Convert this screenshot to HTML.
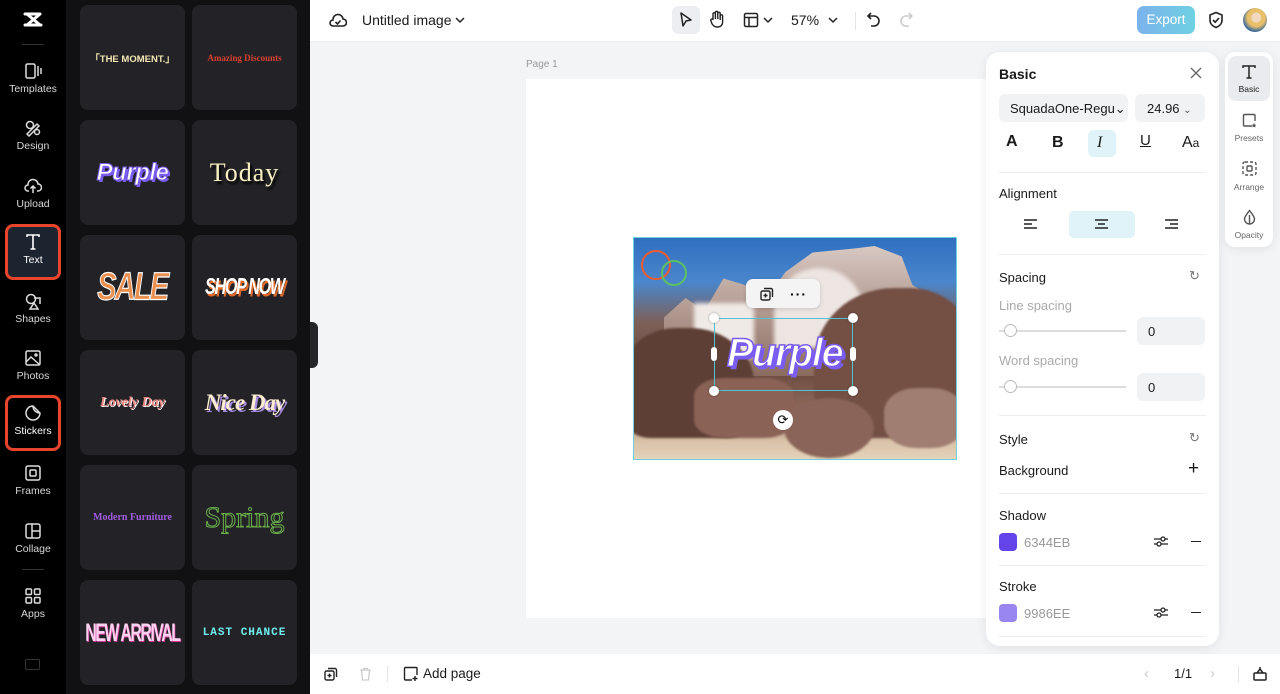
<!DOCTYPE html>
<html><head><meta charset="utf-8">
<style>
*{box-sizing:border-box;margin:0;padding:0}
body{width:1280px;height:694px;overflow:hidden;font-family:"Liberation Sans",sans-serif;background:#f3f4f6;position:relative}
.side{position:absolute;left:0;top:0;width:66px;height:694px;background:#000}
.nav{position:absolute;left:6px;width:54px;height:54px;text-align:center;color:#d8d8d8;font-size:10.5px}
.nav svg{display:block;margin:6px auto 3px}
.nav.sel{border:3px solid #e8452c;border-radius:8px;background:#1c2430;color:#fff}
.panel{position:absolute;left:66px;top:0;width:244px;height:694px;background:#111114}
.card{position:absolute;width:105px;height:105px;background:#232327;border-radius:8px;display:flex;align-items:center;justify-content:center;overflow:hidden}
.top{position:absolute;left:310px;top:0;width:970px;height:42px;background:#fff;border-bottom:1px solid #eceef0}
.bot{position:absolute;left:310px;top:654px;width:970px;height:40px;background:#fff}
.rp{position:absolute;left:986px;top:52px;width:233px;height:594px;background:#fff;border-radius:14px;box-shadow:0 2px 10px rgba(0,0,0,.08)}
.rt{position:absolute;left:1225px;top:52px;width:48px;height:195px;background:#fff;border-radius:10px;box-shadow:0 2px 10px rgba(0,0,0,.08)}
.t{position:absolute;font-size:13px;color:#1a1a1a}
.hr{position:absolute;left:13px;width:207px;height:1px;background:#eceef0}
.box{position:absolute;background:#f1f2f4;border-radius:6px}
.rk{position:absolute;filter:blur(1px)}
</style></head><body>
<div class="side">
 <svg style="position:absolute;left:22px;top:10px" width="22" height="20" viewBox="0 0 22 20"><path d="M3 4h15L5 15h14M3 15h1.5M18 4L5 4M5 4l13 11" stroke="#fff" stroke-width="3" fill="none" stroke-linecap="round" stroke-linejoin="round"/></svg>
 <div style="position:absolute;left:22px;top:44px;width:22px;height:1px;background:#333"></div>
 <div class="nav" style="top:56px"><svg width="18" height="18" viewBox="0 0 18 18" fill="none" stroke="#ddd" stroke-width="1.5"><rect x="2" y="2" width="9" height="14" rx="1.5"/><path d="M14 4v10M17 6v6"/></svg>Templates</div>
 <div class="nav" style="top:113px"><svg width="18" height="18" viewBox="0 0 18 18" fill="none" stroke="#ddd" stroke-width="1.5"><circle cx="6" cy="6" r="3.5"/><path d="M3 15l10-10 2 2-10 10z"/><circle cx="13" cy="13" r="2.5"/></svg>Design</div>
 <div class="nav" style="top:171px"><svg width="18" height="18" viewBox="0 0 18 18" fill="none" stroke="#ddd" stroke-width="1.5"><path d="M5 14H4a3 3 0 010-6 5 5 0 0110-1 3.5 3.5 0 010 7h-1M9 16V9M6.5 11.5L9 9l2.5 2.5"/></svg>Upload</div>
 <div class="nav sel" style="top:224px;left:5px;width:56px;height:56px"><svg width="18" height="18" viewBox="0 0 18 18" fill="none" stroke="#fff" stroke-width="1.6"><path d="M3 4V2h12v2M9 2v14M6.5 16h5"/></svg>Text</div>
 <div class="nav" style="top:286px"><svg width="18" height="18" viewBox="0 0 18 18" fill="none" stroke="#ddd" stroke-width="1.5"><circle cx="7" cy="7" r="4.5"/><path d="M10 6h6v6M10 11l-4 6h8z"/></svg>Shapes</div>
 <div class="nav" style="top:343px"><svg width="18" height="18" viewBox="0 0 18 18" fill="none" stroke="#ddd" stroke-width="1.5"><rect x="2" y="2" width="14" height="14" rx="1.5"/><path d="M2 13l5-5 9 8"/><circle cx="12" cy="6" r="1"/></svg>Photos</div>
 <div class="nav sel" style="top:395px;left:5px;width:56px;height:56px;background:#000"><svg width="18" height="18" viewBox="0 0 18 18" fill="none" stroke="#ddd" stroke-width="1.5"><path d="M16 9A7 7 0 119 2l7 7zM9 2a7 7 0 007 7"/></svg>Stickers</div>
 <div class="nav" style="top:458px"><svg width="18" height="18" viewBox="0 0 18 18" fill="none" stroke="#ddd" stroke-width="1.5"><rect x="2" y="2" width="14" height="14" rx="2"/><rect x="6" y="6" width="6" height="6" rx="1"/></svg>Frames</div>
 <div class="nav" style="top:516px"><svg width="18" height="18" viewBox="0 0 18 18" fill="none" stroke="#ddd" stroke-width="1.5"><rect x="2" y="2" width="14" height="14" rx="2"/><path d="M8 2v14M8 9h8"/></svg>Collage</div>
 <div style="position:absolute;left:22px;top:569px;width:22px;height:1px;background:#333"></div>
 <div class="nav" style="top:581px"><svg width="18" height="18" viewBox="0 0 18 18" fill="none" stroke="#ddd" stroke-width="1.5"><rect x="2" y="2" width="5.5" height="5.5" rx="1"/><rect x="10.5" y="2" width="5.5" height="5.5" rx="1"/><rect x="2" y="10.5" width="5.5" height="5.5" rx="1"/><rect x="10.5" y="10.5" width="5.5" height="5.5" rx="1"/></svg>Apps</div>
 <div style="position:absolute;left:25px;top:659px;width:15px;height:11px;border:1.5px solid #333;border-radius:2px"></div>
</div>
<div class="panel">
 <div class="card" style="left:14px;top:5px"><span style="color:#f4e7b5;font-weight:bold;font-size:9.5px">「THE MOMENT.」</span></div>
 <div class="card" style="left:126px;top:5px"><span style="color:#d9402f;font-family:'Liberation Serif',serif;font-weight:bold;font-size:9px">Amazing Discounts</span></div>
 <div class="card" style="left:14px;top:120px"><span style="color:#fff;font-weight:bold;font-style:italic;font-size:24px;letter-spacing:-.5px;-webkit-text-stroke:1px #7a5cf0;text-shadow:2px 2px 0 #7a5cf0">Purple</span></div>
 <div class="card" style="left:126px;top:120px"><span style="color:#f7efc2;font-family:'Liberation Serif',serif;font-size:26px;letter-spacing:1px;text-shadow:2px 3px 2px #000">Today</span></div>
 <div class="card" style="left:14px;top:235px"><span style="display:inline-block;color:#e98f4f;font-weight:bold;font-style:italic;font-size:34px;letter-spacing:-2px;-webkit-text-stroke:1px #fff;transform:scaleX(.85) scaleY(1.15)">SALE</span></div>
 <div class="card" style="left:126px;top:235px"><span style="display:inline-block;color:#fff;font-weight:bold;font-style:italic;font-size:19px;letter-spacing:-1.5px;text-shadow:2px 2px 0 #e06a2a;transform:scaleX(.85) scaleY(1.2)">SHOP NOW</span></div>
 <div class="card" style="left:14px;top:350px"><span style="color:#f38b85;font-family:'Liberation Serif',serif;font-weight:bold;font-style:italic;font-size:14px;text-shadow:1px 1px 0 #fff">Lovely Day</span></div>
 <div class="card" style="left:126px;top:350px"><span style="color:#fbeed0;font-family:'Liberation Serif',serif;font-weight:bold;font-style:italic;font-size:23px;letter-spacing:-1px;text-shadow:2px 2px 0 #a78ae0">Nice Day</span></div>
 <div class="card" style="left:14px;top:465px"><span style="color:#a15be0;font-family:'Liberation Serif',serif;font-weight:bold;font-size:10px">Modern Furniture</span></div>
 <div class="card" style="left:126px;top:465px"><span style="color:transparent;-webkit-text-stroke:1px #6ab04a;font-family:'Liberation Serif',serif;font-size:30px">Spring</span></div>
 <div class="card" style="left:14px;top:580px"><span style="display:inline-block;color:#fbd3f0;font-weight:bold;font-size:22px;letter-spacing:-2px;transform:scaleX(.72) scaleY(1.15);text-shadow:1px 1px 0 #d3389a;white-space:nowrap">NEW ARRIVAL</span></div>
 <div class="card" style="left:126px;top:580px"><span style="color:#6ff0f0;font-family:'Liberation Mono',monospace;font-weight:bold;font-size:11px;letter-spacing:1px">LAST CHANCE</span></div>
 <div style="position:absolute;left:244px;top:322px;width:8px;height:46px;background:#26262a;border-radius:0 6px 6px 0"></div>
</div>
<div class="top">
 <svg style="position:absolute;left:19px;top:12px" width="18" height="16" viewBox="0 0 18 16" fill="none" stroke="#222" stroke-width="1.6"><path d="M5 14H4a3 3 0 010-6 5 5 0 0110-1 3.5 3.5 0 010 7H5z"/><path d="M6.5 10l2 2 3-3.5"/></svg>
 <div class="t" style="left:52px;top:12px;font-size:14px">Untitled image</div>
 <svg style="position:absolute;left:145px;top:16px" width="10" height="8"><path d="M1 2l4 4 4-4" stroke="#222" stroke-width="1.5" fill="none"/></svg>
 <div style="position:absolute;left:362px;top:6px;width:28px;height:28px;background:#eceef1;border-radius:6px"></div>
 <svg style="position:absolute;left:369px;top:11px" width="14" height="18" viewBox="0 0 14 18"><path d="M2 2l10 7-5 1-3 5z" stroke="#222" stroke-width="1.5" fill="none" stroke-linejoin="round"/></svg>
 <svg style="position:absolute;left:399px;top:10px" width="16" height="18" viewBox="0 0 16 18" fill="none" stroke="#222" stroke-width="1.4"><path d="M4 10V4a1.2 1.2 0 012.4 0v5V2.5a1.2 1.2 0 012.4 0V9V3.5a1.2 1.2 0 012.4 0V10V6a1.2 1.2 0 012.4 0v6c0 3-2 5-5 5s-4-1-5.5-3L2 11a1.2 1.2 0 012-1.5z"/></svg>
 <svg style="position:absolute;left:433px;top:12px" width="16" height="16" viewBox="0 0 16 16" fill="none" stroke="#222" stroke-width="1.5"><rect x="1.5" y="1.5" width="13" height="13" rx="1.5"/><path d="M1.5 5.5h13M6 5.5v9"/></svg>
 <svg style="position:absolute;left:453px;top:16px" width="10" height="8"><path d="M1 2l4 4 4-4" stroke="#222" stroke-width="1.5" fill="none"/></svg>
 <div class="t" style="left:481px;top:12px;font-size:14px">57%</div>
 <svg style="position:absolute;left:518px;top:16px" width="10" height="8"><path d="M1 2l4 4 4-4" stroke="#222" stroke-width="1.5" fill="none"/></svg>
 <div style="position:absolute;left:545px;top:12px;width:1px;height:18px;background:#e2e4e7"></div>
 <svg style="position:absolute;left:556px;top:11px" width="16" height="18" viewBox="0 0 16 18" fill="none" stroke="#222" stroke-width="1.6"><path d="M5 2L2 5l3 3M2 5h6a5 5 0 010 10H5"/></svg>
 <svg style="position:absolute;left:588px;top:11px" width="16" height="18" viewBox="0 0 16 18" fill="none" stroke="#ccc" stroke-width="1.6"><path d="M11 2l3 3-3 3M14 5H8a5 5 0 000 10h3"/></svg>
 <div style="position:absolute;left:827px;top:6px;width:58px;height:28px;border-radius:7px;background:linear-gradient(90deg,#7bb2ec,#6fd0e2);color:#fff;font-size:13.5px;text-align:center;line-height:28px">Export</div>
 <svg style="position:absolute;left:898px;top:11px" width="16" height="18" viewBox="0 0 16 18" fill="none" stroke="#222" stroke-width="1.6"><path d="M8 1.5l6 2.5v5c0 4-3 6.5-6 7.5-3-1-6-3.5-6-7.5V4z"/><path d="M5 9l2.2 2.2L11 7"/></svg>
 <div style="position:absolute;left:933px;top:8px;width:24px;height:24px;border-radius:50%;background:radial-gradient(circle at 55% 40%,#f3d8c0 0 25%,#e9c06a 26% 45%,#3d6b99 70%)"></div>
</div>
<div class="t" style="left:526px;top:59px;font-size:10px;color:#999">Page 1</div>
<div style="position:absolute;left:526px;top:79px;width:470px;height:539px;background:#fff"></div>
<!-- image -->
<div style="position:absolute;left:633px;top:237px;width:324px;height:223px;border:1.5px solid #6fcfdc;overflow:hidden;background:linear-gradient(180deg,#2f6fc0 0%,#4a86cc 20%,#7d6058 38%,#6b4a3e 60%,#8f6a5c 78%,#d9c2a8 92%,#e4d2bb 100%)">
 <div style="position:absolute;left:30px;top:8px;width:270px;height:130px;background:linear-gradient(180deg,#d8c8c2,#8b6b5e);clip-path:polygon(0 55%,8% 40%,15% 50%,22% 25%,30% 30%,38% 40%,45% 20%,55% 5%,70% 2%,78% 0,88% 8%,92% 30%,100% 40%,100% 100%,0 100%)"></div>
 <div style="position:absolute;left:60px;top:65px;width:60px;height:55px;background:#f0eae6;filter:blur(2px)"></div>
 <div style="position:absolute;left:140px;top:30px;width:90px;height:80px;background:#ede5e1;filter:blur(2px);border-radius:45px 45px 0 0"></div>
 <div class="rk" style="left:-10px;top:90px;width:130px;height:110px;background:#5e3f36;border-radius:40% 50% 20% 20%"></div>
 <div class="rk" style="left:60px;top:140px;width:100px;height:60px;background:#8a6256;border-radius:30%"></div>
 <div class="rk" style="left:180px;top:50px;width:160px;height:150px;background:#734f44;border-radius:50% 40% 10% 30%"></div>
 <div class="rk" style="left:150px;top:160px;width:90px;height:60px;background:#8a6458;border-radius:50%"></div>
 <div class="rk" style="left:250px;top:150px;width:80px;height:60px;background:#a07e72;border-radius:40%"></div>
 <div style="position:absolute;left:7px;top:12px;width:30px;height:30px;border:2px solid #f05a30;border-radius:50%"></div>
 <div style="position:absolute;left:27px;top:22px;width:26px;height:26px;border:2px solid #5ec060;border-radius:50%"></div>
</div>
<div style="position:absolute;left:746px;top:279px;width:74px;height:29px;background:#f4f4f5;border-radius:7px;box-shadow:0 1px 4px rgba(0,0,0,.15)"></div>
<svg style="position:absolute;left:760px;top:287px" width="14" height="14" viewBox="0 0 14 14" fill="none" stroke="#222" stroke-width="1.4"><rect x="1" y="4" width="9" height="9" rx="1.5"/><path d="M4 1.5h7a1.5 1.5 0 011.5 1.5v7M5.5 6.5v4M3.5 8.5h4"/></svg>
<div style="position:absolute;left:790px;top:286px;font-size:14px;font-weight:bold;letter-spacing:1px">···</div>
<div style="position:absolute;left:714px;top:318px;width:139px;height:73px;border:1.5px solid #4fc3d3"></div>
<div style="position:absolute;left:716px;top:331px;width:137px;text-align:center;font-weight:bold;font-style:italic;font-size:40px;color:#fff;-webkit-text-stroke:1.5px #7a5cf0;text-shadow:3px 3px 0 #7a5cf0;letter-spacing:-1.5px">Purple</div>
<div style="position:absolute;left:709px;top:313px;width:10px;height:10px;border-radius:50%;background:#fff;box-shadow:0 0 2px rgba(0,0,0,.4)"></div>
<div style="position:absolute;left:848px;top:313px;width:10px;height:10px;border-radius:50%;background:#fff;box-shadow:0 0 2px rgba(0,0,0,.4)"></div>
<div style="position:absolute;left:709px;top:386px;width:10px;height:10px;border-radius:50%;background:#fff;box-shadow:0 0 2px rgba(0,0,0,.4)"></div>
<div style="position:absolute;left:848px;top:386px;width:10px;height:10px;border-radius:50%;background:#fff;box-shadow:0 0 2px rgba(0,0,0,.4)"></div>
<div style="position:absolute;left:711px;top:347px;width:6px;height:14px;border-radius:3px;background:#fff"></div>
<div style="position:absolute;left:850px;top:347px;width:6px;height:14px;border-radius:3px;background:#fff"></div>
<div style="position:absolute;left:773px;top:410px;width:20px;height:20px;border-radius:50%;background:#fff;text-align:center;line-height:20px;font-size:13px">⟳</div>
<!-- right panel -->
<div class="rp">
 <div class="t" style="left:13px;top:14px;font-size:14px;font-weight:bold">Basic</div>
 <svg style="position:absolute;left:204px;top:15px" width="12" height="12"><path d="M1 1l10 10M11 1L1 11" stroke="#666" stroke-width="1.3"/></svg>
 <div class="box" style="left:13px;top:42px;width:129px;height:28px"></div>
 <div class="t" style="left:24px;top:49px">SquadaOne-Regu⌄</div>
 <div class="box" style="left:149px;top:42px;width:70px;height:28px"></div>
 <div class="t" style="left:161px;top:49px">24.96 <span style="font-size:10px;color:#555">⌄</span></div>
 <div class="t" style="left:20px;top:81px;font-size:16px;font-weight:bold">A</div>
 <div class="t" style="left:66px;top:82px;font-size:16px;font-weight:bold">B</div>
 <div style="position:absolute;left:102px;top:78px;width:28px;height:27px;background:#dff3f8;border-radius:5px"></div>
 <div class="t" style="left:111px;top:82px;font-size:16px;font-style:italic;font-family:'Liberation Serif',serif">I</div>
 <div class="t" style="left:154px;top:80px;font-size:15px;text-decoration:underline">U</div>
 <div class="t" style="left:196px;top:82px;font-size:16px">A<span style="font-size:12px">a</span></div>
 <div class="hr" style="top:120px"></div>
 <div class="t" style="left:13px;top:134px">Alignment</div>
 <div style="position:absolute;left:83px;top:159px;width:66px;height:27px;background:#dff3f8;border-radius:5px"></div>
 <svg style="position:absolute;left:38px;top:167px" width="14" height="11"><path d="M0 1h13M0 5h8M0 9h13" stroke="#222" stroke-width="1.4"/></svg>
 <svg style="position:absolute;left:109px;top:167px" width="14" height="11"><path d="M0 1h13M3 5h7M0 9h13" stroke="#222" stroke-width="1.4"/></svg>
 <svg style="position:absolute;left:179px;top:167px" width="14" height="11"><path d="M0 1h13M5 5h8M0 9h13" stroke="#222" stroke-width="1.4"/></svg>
 <div class="hr" style="top:202px"></div>
 <div class="t" style="left:13px;top:218px">Spacing</div>
 <div class="t" style="left:203px;top:216px;color:#777">↻</div>
 <div class="t" style="left:13px;top:246px;color:#aaa">Line spacing</div>
 <div style="position:absolute;left:13px;top:278px;width:127px;height:1.5px;background:#ddd"></div>
 <div style="position:absolute;left:18px;top:272px;width:13px;height:13px;border-radius:50%;background:#fff;border:1px solid #bbb"></div>
 <div class="box" style="left:151px;top:265px;width:68px;height:28px"></div>
 <div class="t" style="left:162px;top:272px">0</div>
 <div class="t" style="left:13px;top:301px;color:#aaa">Word spacing</div>
 <div style="position:absolute;left:13px;top:334px;width:127px;height:1.5px;background:#ddd"></div>
 <div style="position:absolute;left:18px;top:328px;width:13px;height:13px;border-radius:50%;background:#fff;border:1px solid #bbb"></div>
 <div class="box" style="left:151px;top:321px;width:68px;height:28px"></div>
 <div class="t" style="left:162px;top:328px">0</div>
 <div class="hr" style="top:363px"></div>
 <div class="t" style="left:13px;top:380px">Style</div>
 <div class="t" style="left:203px;top:378px;color:#777">↻</div>
 <div class="t" style="left:13px;top:411px">Background</div>
 <div class="t" style="left:202px;top:406px;font-size:19px;font-weight:300">+</div>
 <div class="hr" style="top:441px"></div>
 <div class="t" style="left:13px;top:456px">Shadow</div>
 <div style="position:absolute;left:13px;top:481px;width:18px;height:18px;border-radius:4px;background:#6344eb"></div>
 <div class="t" style="left:38px;top:483px;color:#999">6344EB</div>
 <svg style="position:absolute;left:168px;top:483px" width="14" height="13" fill="none" stroke="#222" stroke-width="1.3"><path d="M0 4h14M0 9h14"/><circle cx="9" cy="4" r="2" fill="#fff"/><circle cx="5" cy="9" r="2" fill="#fff"/></svg>
 <div style="position:absolute;left:205px;top:489px;width:10px;height:1.3px;background:#222"></div>
 <div class="hr" style="top:513px"></div>
 <div class="t" style="left:13px;top:527px">Stroke</div>
 <div style="position:absolute;left:13px;top:552px;width:18px;height:18px;border-radius:4px;background:#9986ee"></div>
 <div class="t" style="left:38px;top:554px;color:#999">9986EE</div>
 <svg style="position:absolute;left:168px;top:554px" width="14" height="13" fill="none" stroke="#222" stroke-width="1.3"><path d="M0 4h14M0 9h14"/><circle cx="9" cy="4" r="2" fill="#fff"/><circle cx="5" cy="9" r="2" fill="#fff"/></svg>
 <div style="position:absolute;left:205px;top:560px;width:10px;height:1.3px;background:#222"></div>
 <div class="hr" style="top:584px"></div>
</div>
<div class="rt">
 <div style="position:absolute;left:3px;top:4px;width:42px;height:45px;background:#e9ebee;border-radius:8px"></div>
 <svg style="position:absolute;left:16px;top:12px" width="16" height="16" fill="none" stroke="#222" stroke-width="1.5"><path d="M2 4V2h12v2M8 2v12M5.5 14h5"/></svg>
 <div class="t" style="left:0;width:48px;text-align:center;top:32px;font-size:8.5px">Basic</div>
 <svg style="position:absolute;left:17px;top:61px" width="15" height="15" fill="none" stroke="#555" stroke-width="1.4"><path d="M10 13H2.5a1 1 0 01-1-1V2.5a1 1 0 011-1H12a1 1 0 011 1V8"/><path d="M12 10l.8 1.6 1.5.3-1.1 1 .3 1.6-1.5-.8-1.5.8.3-1.6-1.1-1 1.5-.3z" fill="#555" stroke="none"/></svg>
 <div class="t" style="left:0;width:48px;text-align:center;top:81px;font-size:8.5px;color:#666">Presets</div>
 <svg style="position:absolute;left:17px;top:109px" width="15" height="15" fill="none" stroke="#555" stroke-width="1.4"><rect x="1" y="1" width="13" height="13" rx="2" stroke-dasharray="3 2"/><rect x="5" y="5" width="5" height="5" rx="1"/></svg>
 <div class="t" style="left:0;width:48px;text-align:center;top:130px;font-size:8.5px;color:#666">Arrange</div>
 <svg style="position:absolute;left:17px;top:157px" width="15" height="16" fill="none" stroke="#555" stroke-width="1.4"><path d="M7.5 1.5C5 5 2.5 7.5 2.5 10a5 5 0 0010 0c0-2.5-2.5-5-5-8.5z"/><path d="M7.5 6v8.5" /></svg>
 <div class="t" style="left:0;width:48px;text-align:center;top:178px;font-size:8.5px;color:#666">Opacity</div>
</div>
<div class="bot">
 <svg style="position:absolute;left:14px;top:13px" width="14" height="14" viewBox="0 0 14 14" fill="none" stroke="#222" stroke-width="1.4"><rect x="1" y="4" width="9" height="9" rx="1.5"/><path d="M4 1.5h7a1.5 1.5 0 011.5 1.5v7M5.5 6.5v4M3.5 8.5h4"/></svg>
 <svg style="position:absolute;left:49px;top:13px" width="13" height="14" fill="none" stroke="#ccc" stroke-width="1.3"><path d="M1 3h11M4.5 3V1.5h4V3M2.5 3l1 10h6l1-10"/></svg>
 <div style="position:absolute;left:77px;top:12px;width:1px;height:16px;background:#e2e4e7"></div>
 <svg style="position:absolute;left:93px;top:12px" width="16" height="16" fill="none" stroke="#222" stroke-width="1.4"><path d="M9 14H2.5a1 1 0 01-1-1V2.5a1 1 0 011-1H13a1 1 0 011 1V9M12 10v5M9.5 12.5h5"/></svg>
 <div class="t" style="left:113px;top:12px;font-size:13.5px">Add page</div>
 <div class="t" style="left:834px;top:11px;color:#ccc;font-size:15px">‹</div>
 <div class="t" style="left:864px;top:12px;font-size:13px">1/1</div>
 <div class="t" style="left:900px;top:11px;color:#ccc;font-size:15px">›</div>
 <div style="position:absolute;left:928px;top:12px;width:1px;height:16px;background:#e2e4e7"></div>
 <svg style="position:absolute;left:942px;top:12px" width="16" height="16" fill="none" stroke="#222" stroke-width="1.5"><rect x="2" y="7" width="12" height="7" rx="1"/><path d="M5 7l3-4 3 4M8 1v2"/></svg>
</div>
</body></html>
